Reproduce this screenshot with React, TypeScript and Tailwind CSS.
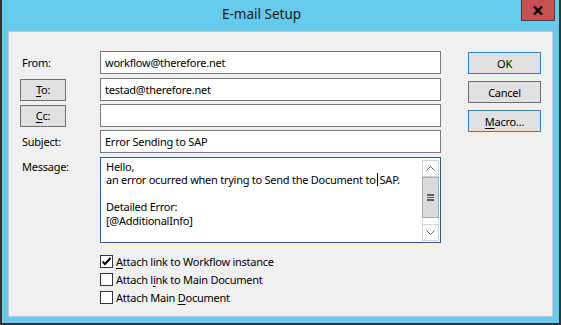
import React from "react";

function GrayBtn({ children, blue = false, className = "" }: { children: React.ReactNode; blue?: boolean; className?: string }) {
  return (
    <div
      className={
        "flex items-center justify-center bg-[#e1e1e1] border " +
        (blue ? "border-[#3c7fb1] " : "border-[#707070] ") +
        className
      }
    >
      {children}
    </div>
  );
}

function Field({ value = "" }: { value?: string }) {
  return (
    <div className="w-[341px] h-[23px] bg-white border border-[#7a7a7a] flex items-center pl-[4px]">
      {value}
    </div>
  );
}

function Check({ checked, children }: { checked?: boolean; children: React.ReactNode }) {
  return (
    <div className="flex items-center h-[13px]">
      <div className="w-[13px] h-[13px] bg-white border border-[#333333] flex items-center justify-center">
        {checked && (
          <svg width="11" height="11" viewBox="0 0 11 11">
            <polyline points="1.5,5.5 4,8 9.5,2" fill="none" stroke="#000" strokeWidth="2" />
          </svg>
        )}
      </div>
      <span className="ml-[3px]">{children}</span>
    </div>
  );
}

function Chevron({ up }: { up?: boolean }) {
  return (
    <svg width="9" height="5" viewBox="0 0 9 5">
      <polyline
        points={up ? "0.5,4.5 4.5,0.5 8.5,4.5" : "0.5,0.5 4.5,4.5 8.5,0.5"}
        fill="none"
        stroke="#606060"
        strokeWidth="1"
      />
    </svg>
  );
}

export default function App() {
  return (
    <div className="w-[561px] h-[325px] bg-[#333333] px-[2px] pb-[2px] font-['Noto_Sans',sans-serif] text-[11px] tracking-[-0.25px] text-black leading-none">
      <div className="h-full bg-[#66cbea] flex flex-col">
        {/* Title bar */}
        <div className="h-[31px] flex items-start shrink-0">
          <div className="flex-1 h-[31px] flex items-center justify-center text-[13.5px] tracking-normal text-[#1a1a1a] pb-[1px]">
            E-mail Setup
          </div>
          <div className="w-[34px] h-[21px] mr-[4px] bg-[#c75050] border border-[#5e3535] border-t-0 flex items-center justify-center">
            <svg width="10" height="9" viewBox="0 0 10 9">
              <path d="M1 0.5 L9 8.5 M9 0.5 L1 8.5" stroke="#000" strokeWidth="2.4" />
            </svg>
          </div>
        </div>

        {/* Client area */}
        <div className="mx-[6px] h-[286px] bg-[#f0f0f0] border border-[#b4ccd8] flex pl-[11px] pt-[19px]">
          {/* left block */}
          <div className="flex flex-col w-[421px]">
            <div className="flex items-center h-[23px]">
              <div className="w-[80px] pl-[2px]">From:</div>
              <Field value="workflow@therefore.net" />
            </div>
            <div className="flex items-center h-[23px] mt-[4px]">
              <div className="w-[80px]">
                <GrayBtn className="w-[46px] h-[22px]">
                  <span>
                    <u className="underline-offset-2">T</u>o:
                  </span>
                </GrayBtn>
              </div>
              <Field value="testad@therefore.net" />
            </div>
            <div className="flex items-center h-[23px] mt-[3px]">
              <div className="w-[80px]">
                <GrayBtn className="w-[46px] h-[22px]">
                  <span>
                    <u className="underline-offset-2">C</u>c:
                  </span>
                </GrayBtn>
              </div>
              <Field />
            </div>
            <div className="flex items-center h-[23px] mt-[3px]">
              <div className="w-[80px] pl-[2px]">Subject:</div>
              <Field value="Error Sending to SAP" />
            </div>
            <div className="flex items-start mt-[4px]">
              <div className="w-[80px] pl-[2px] pt-[4px]">Message:</div>
              <div className="w-[341px] h-[86px] bg-white border border-[#26609a] flex">
                <div className="flex-1 pl-[5px] pt-[2px] leading-[13.4px]">
                  <div>Hello,</div>
                  <div>
                    an error ocurred when trying to Send the Document to
                    <span className="relative inline-block w-[4px] h-[13px] align-top">
                      <span className="absolute left-[1px] top-0 w-px h-[13px] bg-black" />
                    </span>
                    SAP.
                  </div>
                  <div>&nbsp;</div>
                  <div>Detailed Error:</div>
                  <div>[@AdditionalInfo]</div>
                </div>
                <div className="w-[17px] h-[81px] mt-[2px] mr-[1px] flex flex-col border-x border-[#e0e0e0]">
                  <div className="h-[17px] bg-white border border-[#d4d4d4] -mx-px flex items-center justify-center">
                    <Chevron up />
                  </div>
                  <div className="h-[41px] bg-[#dadada] border border-[#ababab] -mx-px flex flex-col items-center justify-center gap-[1px]">
                    <div className="w-[7px] h-[1.5px] bg-[#606060]" />
                    <div className="w-[7px] h-[1.5px] bg-[#606060]" />
                    <div className="w-[7px] h-[1.5px] bg-[#606060]" />
                  </div>
                  <div className="flex-1 bg-white" />
                  <div className="h-[17px] bg-white border border-[#d4d4d4] -mx-px flex items-center justify-center">
                    <Chevron />
                  </div>
                </div>
              </div>
            </div>
            <div className="ml-[80px] mt-[12px] flex flex-col gap-[5px]">
              <Check checked>
                <u className="underline-offset-2">A</u>ttach link to Workflow instance
              </Check>
              <Check>
                Attach l<u className="underline-offset-2">i</u>nk to Main Document
              </Check>
              <Check>
                Attach Main <u className="underline-offset-2">D</u>ocument
              </Check>
            </div>
          </div>

          {/* right buttons */}
          <div className="ml-[27px] mt-[1px] flex flex-col gap-[7px]">
            <GrayBtn blue className="w-[73px] h-[22px]">OK</GrayBtn>
            <GrayBtn className="w-[73px] h-[22px]">Cancel</GrayBtn>
            <GrayBtn blue className="w-[73px] h-[22px]">
              <span>
                <u className="underline-offset-2">M</u>acro...
              </span>
            </GrayBtn>
          </div>
        </div>
      </div>
    </div>
  );
}
